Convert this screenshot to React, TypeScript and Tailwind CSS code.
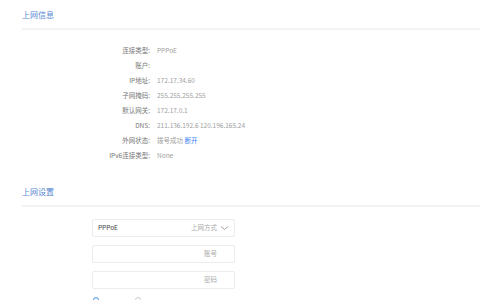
import React from 'react';

const rows: { label: string; value: React.ReactNode }[] = [
  { label: '连接类型:', value: 'PPPoE' },
  { label: '账户:', value: '' },
  { label: 'IP地址:', value: '172.17.34.60' },
  { label: '子网掩码:', value: '255.255.255.255' },
  { label: '默认网关:', value: '172.17.0.1' },
  { label: 'DNS:', value: '211.136.192.6 120.196.165.24' },
  {
    label: '外网状态:',
    value: (
      <>
        拨号成功 <span className="text-[#3b82f6]">断开</span>
      </>
    ),
  },
  { label: 'IPv6连接类型:', value: 'None' },
];

const SectionTitle = ({ title }: { title: string }) => (
  <div>
    <div className="pl-[22px] h-[18px] leading-[18px] text-[8px] text-[#5585d4]">{title}</div>
    <div className="ml-[22px] mt-[4px] h-[2px] bg-[#f3f3f3]" />
  </div>
);

const Field = ({ value, hint, chevron }: { value?: string; hint: string; chevron?: boolean }) => (
  <div className="w-[143px] h-[18px] border border-[#ececec] rounded-[2px] flex items-center px-[5px]">
    <span className="flex-1 text-[6.5px] text-[#444]">{value}</span>
    <span className="text-[6.5px] text-[#aaa]">{hint}</span>
    {chevron ? (
      <svg width="9" height="6" viewBox="0 0 9 6" className="ml-[3px]">
        <path d="M1 1.5 L4.5 4.5 L8 1.5" fill="none" stroke="#999" strokeWidth="0.9" />
      </svg>
    ) : (
      <span className="w-[12px]" />
    )}
  </div>
);

export default function App() {
  return (
    <div
      className="w-[480px] h-[300px] bg-white overflow-hidden"
      style={{ fontFamily: '"Noto Sans CJK SC", "Noto Sans", sans-serif' }}
    >
      <div className="pt-[6px]">
        <SectionTitle title="上网信息" />
      </div>

      <div className="mt-[13px] flex flex-col">
        {rows.map((r) => (
          <div key={r.label} className="flex h-[15px] items-center text-[6.5px]">
            <div className="w-[150px] text-right text-[#777]">{r.label}</div>
            <div className="pl-[7px] text-[#a0a0a0]">{r.value}</div>
          </div>
        ))}
      </div>

      <div className="mt-[20px]">
        <SectionTitle title="上网设置" />
      </div>

      <div className="mt-[12px] pl-[92px] flex flex-col gap-[8px]">
        <Field value="PPPoE" hint="上网方式" chevron />
        <Field hint="账号" />
        <Field hint="密码" />
        <div className="flex gap-[36px] pl-[1px]">
          <div className="w-[6px] h-[6px] rounded-full border border-[#4a90e2]" />
          <div className="w-[6px] h-[6px] rounded-full border border-[#ccc]" />
        </div>
      </div>
    </div>
  );
}
